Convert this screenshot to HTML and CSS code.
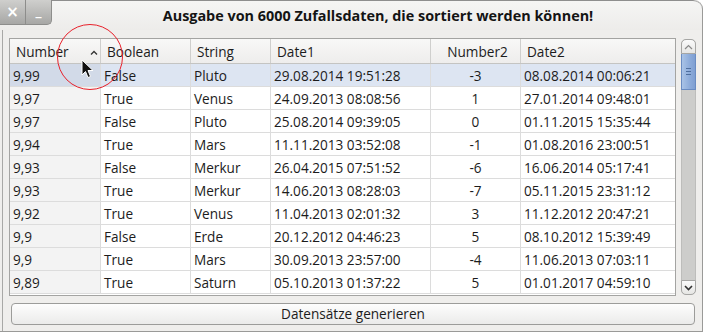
FILE: index.html
```html
<!DOCTYPE html>
<html>
<head>
<meta charset="utf-8">
<link rel="stylesheet" href="styles.css">
</head>
<body>
<div class="window">
  <div class="titlebar">
    <div class="wbtn close">×</div>
    <div class="wbtn mini">_</div>
    <div class="title">Ausgabe von 6000 Zufallsdaten, die sortiert werden können!</div>
  </div>
  <div class="content">
    <div class="tablearea">
      <div class="table">
        <div class="row head">
          <div class="cell">Number<svg class="sort" width="8" height="5" viewBox="0 0 8 5"><path d="M1 4.5 L4 1.5 L7 4.5" fill="none" stroke="#333" stroke-width="1.3"/></svg></div>
          <div class="cell">Boolean</div>
          <div class="cell">String</div>
          <div class="cell">Date1</div>
          <div class="cell center">Number2</div>
          <div class="cell last">Date2</div>
        </div>
        <div class="row sel">
          <div class="cell first">9,99</div><div class="cell">False</div><div class="cell">Pluto</div><div class="cell">29.08.2014 19:51:28</div><div class="cell center">-3</div><div class="cell last">08.08.2014 00:06:21</div>
        </div>
        <div class="row">
          <div class="cell first">9,97</div><div class="cell">True</div><div class="cell">Venus</div><div class="cell">24.09.2013 08:08:56</div><div class="cell center">1</div><div class="cell last">27.01.2014 09:48:01</div>
        </div>
        <div class="row">
          <div class="cell first">9,97</div><div class="cell">False</div><div class="cell">Pluto</div><div class="cell">25.08.2014 09:39:05</div><div class="cell center">0</div><div class="cell last">01.11.2015 15:35:44</div>
        </div>
        <div class="row">
          <div class="cell first">9,94</div><div class="cell">True</div><div class="cell">Mars</div><div class="cell">11.11.2013 03:52:08</div><div class="cell center">-1</div><div class="cell last">01.08.2016 23:00:51</div>
        </div>
        <div class="row">
          <div class="cell first">9,93</div><div class="cell">False</div><div class="cell">Merkur</div><div class="cell">26.04.2015 07:51:52</div><div class="cell center">-6</div><div class="cell last">16.06.2014 05:17:41</div>
        </div>
        <div class="row">
          <div class="cell first">9,93</div><div class="cell">True</div><div class="cell">Merkur</div><div class="cell">14.06.2013 08:28:03</div><div class="cell center">-7</div><div class="cell last">05.11.2015 23:31:12</div>
        </div>
        <div class="row">
          <div class="cell first">9,92</div><div class="cell">True</div><div class="cell">Venus</div><div class="cell">11.04.2013 02:01:32</div><div class="cell center">3</div><div class="cell last">11.12.2012 20:47:21</div>
        </div>
        <div class="row">
          <div class="cell first">9,9</div><div class="cell">False</div><div class="cell">Erde</div><div class="cell">20.12.2012 04:46:23</div><div class="cell center">5</div><div class="cell last">08.10.2012 15:39:49</div>
        </div>
        <div class="row">
          <div class="cell first">9,9</div><div class="cell">True</div><div class="cell">Mars</div><div class="cell">30.09.2013 23:57:00</div><div class="cell center">-4</div><div class="cell last">11.06.2013 07:03:11</div>
        </div>
        <div class="row">
          <div class="cell first">9,89</div><div class="cell">True</div><div class="cell">Saturn</div><div class="cell">05.10.2013 01:37:22</div><div class="cell center">5</div><div class="cell last">01.01.2017 04:59:10</div>
        </div>
      </div>
      <div class="scrollbar">
        <div class="sb-btn up"><svg width="9" height="6" viewBox="0 0 9 6"><path d="M1 5 L4.5 1.5 L8 5" fill="none" stroke="#8a8a8a" stroke-width="1.2"/></svg></div>
        <div class="sb-handle"><span></span><span></span><span></span></div>
        <div class="sb-track"></div>
        <div class="sb-btn down"><svg width="9" height="6" viewBox="0 0 9 6"><path d="M1 1 L4.5 4.5 L8 1" fill="none" stroke="#333" stroke-width="1.6"/></svg></div>
      </div>
    </div>
    <div class="button">Datensätze generieren</div>
  </div>
  <div class="circle"></div>
  <svg class="cursor" width="13" height="20" viewBox="0 0 13 20"><path d="M1 1 L1 16 L4.5 12.5 L7 18.5 L9.5 17.5 L7 11.5 L12 11.5 Z" fill="#111" stroke="#fff" stroke-width="1"/></svg>
</div>
</body>
</html>
```

FILE: styles.css
```css
html, body {
  margin: 0;
  padding: 0;
  background: #ffffff;
}
body {
  font-family: "Open Sans", "DejaVu Sans", sans-serif;
  font-size: 13.6px;
  color: #1c1c1c;
}
.window {
  position: relative;
  width: 703px;
  height: 332px;
  box-sizing: border-box;
  background: #efeeec;
  border-right: 1px solid #9a9a98;
  border-bottom: 1px solid #9a9a98;
  border-top-right-radius: 9px;
  overflow: hidden;
}
.titlebar {
  display: flex;
  height: 30px;
  box-sizing: border-box;
  border-top: 1px solid #8e8e8e;
  border-top-right-radius: 9px;
  background: linear-gradient(#f5f5f4, #edecea);
}
.wbtn {
  width: 26px;
  height: 25px;
  margin-top: -1px;
  box-sizing: border-box;
  background: linear-gradient(#cfcfcd, #a7a7a5);
  color: #fff;
  font-family: "DejaVu Sans", sans-serif;
  font-weight: bold;
  display: flex;
  align-items: center;
  justify-content: center;
  border-right: 1px solid #8d8d8b;
  border-bottom: 1px solid #8d8d8b;
}
.close {
  font-size: 15px;
}
.mini {
  font-size: 12px;
  padding-bottom: 2px;
  border-bottom-right-radius: 5px;
}
.title {
  flex: 1;
  text-align: center;
  font-weight: bold;
  font-size: 14.4px;
  line-height: 30px;
  color: #141414;
  padding-left: 2px;
}
.content {
  padding: 8px 6px 0 6px;
  border-left: 1px solid #a8a8a6;
  margin-left: 2px;
  height: 301px;
  box-sizing: border-box;
}
.tablearea {
  display: flex;
  gap: 5px;
  height: 258px;
}
.table {
  width: 669px;
  height: 258px;
  box-sizing: border-box;
  border: 1px solid #a4a4a2;
  background: #ffffff;
  overflow: hidden;
}
.row {
  display: grid;
  grid-template-columns: 91px 90px 80px 160px 90px 1fr;
  height: 23px;
  box-sizing: border-box;
  border-bottom: 1px solid #dcdcdc;
}
.row.head {
  height: 25px;
  background: linear-gradient(#f8f8f7, #eeedec);
  border-bottom: 1px solid #c4c4c2;
}
.cell {
  box-sizing: border-box;
  border-right: 1px solid #dcdcdc;
  padding-left: 3px;
  padding-top: 2px;
  line-height: 20px;
  white-space: nowrap;
}
.head .cell {
  padding-left: 6px;
  padding-top: 1px;
  line-height: 23px;
  border-right: 1px solid #cfcfcd;
  position: relative;
}
.cell.last {
  border-right: none;
}
.cell.center {
  text-align: center;
  padding-left: 0;
}
.head .cell.center {
  padding-left: 4px;
}
.cell.first {
  background: #f3f3f3;
}
.sort {
  position: absolute;
  left: 80px;
  top: 11px;
}
.row.sel {
  background: #dde5f2;
}
.row.sel .cell.first {
  background: #d2dae8;
}
.scrollbar {
  width: 15px;
  height: 256px;
  margin-top: 1px;
  display: flex;
  flex-direction: column;
  background: #cdcdcb;
  border-radius: 5px;
}
.sb-btn {
  height: 15px;
  box-sizing: border-box;
  background: linear-gradient(#fbfbfb, #e6e6e4);
  border: 1px solid #a6a6a4;
  display: flex;
  align-items: center;
  justify-content: center;
}
.sb-btn.up {
  border-radius: 5px 5px 0 0;
}
.sb-btn.down {
  border-radius: 0 0 5px 5px;
}
.sb-handle {
  height: 36px;
  box-sizing: border-box;
  background: linear-gradient(90deg, #a9c3e6, #8cabda 60%, #7f9fd2);
  border: 1px solid #6a8cc2;
  border-top: none;
  display: flex;
  flex-direction: column;
  align-items: center;
  justify-content: center;
  gap: 2px;
}
.sb-handle span {
  display: block;
  width: 5px;
  height: 1px;
  background: #4f6f9e;
}
.sb-track {
  flex: 1;
  border-left: 1px solid #bdbdbb;
  border-right: 1px solid #bdbdbb;
}
.button {
  margin: 7px 0 0 2px;
  width: 684px;
  height: 22px;
  box-sizing: border-box;
  border: 1px solid #9c9c9a;
  border-radius: 4px;
  background: linear-gradient(#fdfdfd, #ebebea);
  text-align: center;
  line-height: 20px;
}
.circle {
  position: absolute;
  left: 57px;
  top: 24px;
  width: 66px;
  height: 66px;
  box-sizing: border-box;
  border: 1px solid #e8202a;
  border-radius: 50%;
}
.cursor {
  position: absolute;
  left: 81px;
  top: 59px;
}
```
